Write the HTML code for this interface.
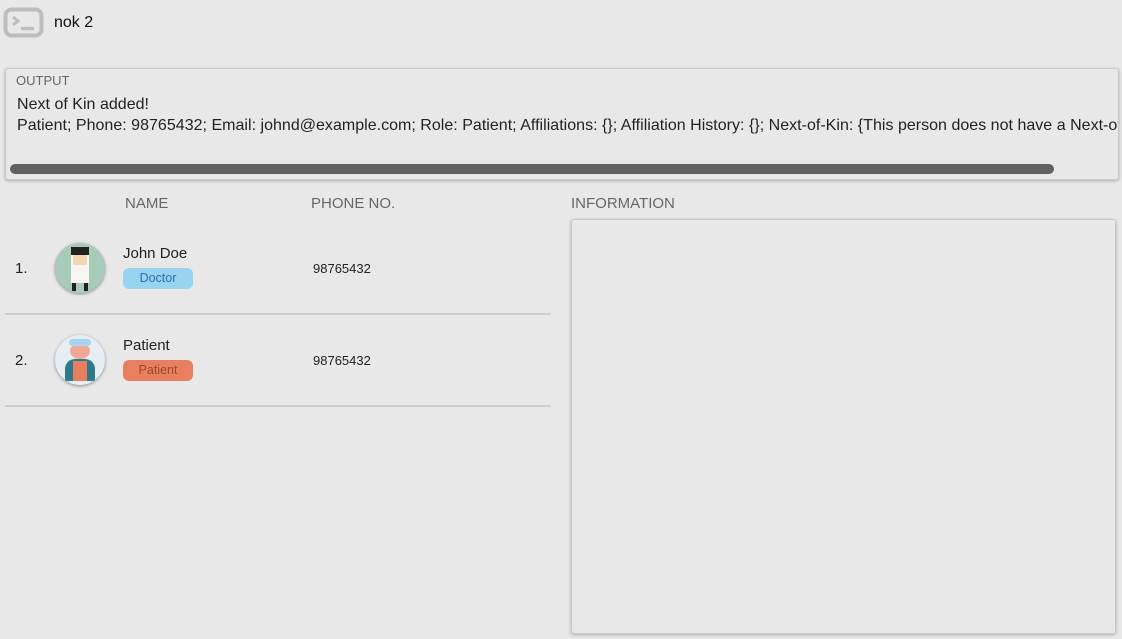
<!DOCTYPE html>
<html><head><style>
body{margin:0;width:1122px;height:639px;background:#e8e8e8;font-family:"Liberation Sans",sans-serif;position:relative;overflow:hidden;color:#222}
.a{position:absolute}
</style></head><body>
<svg class="a" style="left:3px;top:7px" width="41" height="31" viewBox="0 0 41 31"><rect x="2.5" y="2.5" width="36" height="26" rx="6" fill="none" stroke="#bdbdbd" stroke-width="4"/><path d="M10 10l5 4-5 4" fill="none" stroke="#bdbdbd" stroke-width="3"/><path d="M18 21.5h13" stroke="#bdbdbd" stroke-width="3.5"/></svg>
<div class="a" style="left:54px;top:14px;font-size:16px;color:#111">nok 2</div>
<div class="a" style="left:5px;top:68px;width:1112px;height:110px;border:1px solid #c8c8c8;border-radius:3px;box-shadow:0 1px 3px rgba(0,0,0,.25);background:#e8e8e8;overflow:hidden">
<div class="a" style="left:10px;top:4px;font-size:13px;color:#666">OUTPUT</div>
<div class="a" style="left:11px;top:25px;font-size:16px;color:#222;white-space:nowrap;line-height:21px;letter-spacing:0.02px">Next of Kin added!<br>Patient; Phone: 98765432; Email: johnd@example.com; Role: Patient; Affiliations: {}; Affiliation History: {}; Next-of-Kin: {This person does not have a Next-of-Kin}</div>
<div class="a" style="left:4px;top:95px;width:1044px;height:10px;border-radius:5px;background:#616161"></div>
</div>
<div class="a" style="left:125px;top:195px;font-size:15px;color:#666">NAME</div>
<div class="a" style="left:311px;top:195px;font-size:15px;color:#666">PHONE NO.</div>
<div class="a" style="left:571px;top:195px;font-size:15px;color:#666">INFORMATION</div>
<div class="a" style="left:571px;top:219px;width:543px;height:413px;border:1px solid #c8c8c8;border-radius:3px;box-shadow:0 1px 3px rgba(0,0,0,.25)"></div>

<div class="a" style="left:15px;top:260px;font-size:15px">1.</div>
<div class="a" style="left:55px;top:243px;width:50px;height:50px;border-radius:50%;background:#a8cbb8;box-shadow:0 1px 3px rgba(0,0,0,.4);overflow:hidden"><div class="a" style="left:16px;top:12px;width:18px;height:28px;background:#f5f5f5"></div><div class="a" style="left:16px;top:4px;width:18px;height:8px;background:#222"></div><div class="a" style="left:18px;top:12px;width:14px;height:10px;background:#f5d5b0"></div><div class="a" style="left:17px;top:40px;width:4px;height:8px;background:#222"></div><div class="a" style="left:29px;top:40px;width:4px;height:8px;background:#222"></div></div>
<div class="a" style="left:123px;top:245px;font-size:15px">John Doe</div>
<div class="a" style="left:123px;top:268px;width:70px;height:21px;border-radius:6px;background:#98d3f0;color:#2a6fb8;font-size:12.5px;text-align:center;line-height:21px">Doctor</div>
<div class="a" style="left:313px;top:261px;font-size:13px">98765432</div>
<div class="a" style="left:5px;top:313px;width:546px;height:2px;background:#cdcdcd"></div>

<div class="a" style="left:15px;top:352px;font-size:15px">2.</div>
<div class="a" style="left:55px;top:335px;width:50px;height:50px;border-radius:50%;background:#e6eef3;box-shadow:0 1px 3px rgba(0,0,0,.4);overflow:hidden"><div class="a" style="left:10px;top:24px;width:30px;height:22px;border-radius:10px 10px 0 0;background:#2c7a8c"></div><div class="a" style="left:18px;top:26px;width:14px;height:20px;background:#e8805f"></div><div class="a" style="left:15px;top:8px;width:20px;height:16px;border-radius:50%;background:#f0a898"></div><div class="a" style="left:14px;top:4px;width:22px;height:7px;border-radius:4px;background:#a8d4ee"></div></div>
<div class="a" style="left:123px;top:337px;font-size:15px">Patient</div>
<div class="a" style="left:123px;top:360px;width:70px;height:21px;border-radius:6px;background:#e8805f;color:#9c4a1e;font-size:12.5px;text-align:center;line-height:21px">Patient</div>
<div class="a" style="left:313px;top:353px;font-size:13px">98765432</div>
<div class="a" style="left:5px;top:405px;width:546px;height:2px;background:#cdcdcd"></div>
</body></html>
